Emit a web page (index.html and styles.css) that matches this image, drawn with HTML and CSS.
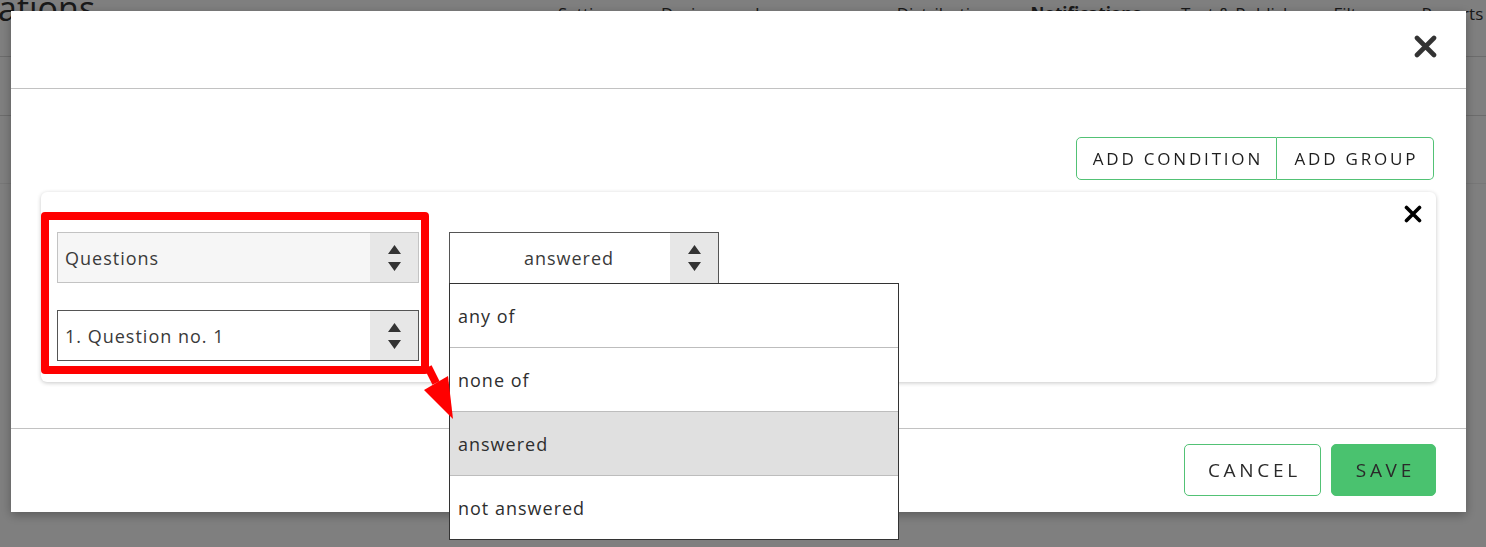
FILE: index.html
```html
<!DOCTYPE html>
<html lang="en">
<head>
    <meta charset="UTF-8">
    <meta name="viewport" content="width=device-width, initial-scale=1.0">
    <title>Notifications</title>
    <link rel="stylesheet" href="styles.css">
</head>
<body>
    <div class="page">
        <header class="page-head">
            <h1 class="page-title">ations</h1>
            <nav class="page-nav">
                <span>Settings</span>
                <span>Design</span>
                <span class="wide">Languages</span>
                <span>Distribution</span>
                <span class="active">Notifications</span>
                <span>Test &amp; Publish</span>
                <span>Filters</span>
                <span>Reports</span>
            </nav>
        </header>
        <div class="page-tabs"></div>
        <div class="page-bar"></div>
    </div>
    <div class="backdrop"></div>

    <div class="modal">
        <div class="modal-head">
            <button class="modal-close" aria-label="Close">
                <svg width="23" height="23" viewBox="0 0 23 23">
                    <path d="M3 3 L20 20 M20 3 L3 20" stroke="#333" stroke-width="4.6" stroke-linecap="round"/>
                </svg>
            </button>
        </div>
        <div class="modal-body">
            <div class="toolbar">
                <div class="btn-group">
                    <button class="btn-outline btn-first">ADD CONDITION</button>
                    <button class="btn-outline btn-last">ADD GROUP</button>
                </div>
            </div>
            <div class="condition">
                <button class="condition-remove" aria-label="Remove">
                    <svg width="18" height="18" viewBox="0 0 18 18">
                        <path d="M2.5 2.5 L15.5 15.5 M15.5 2.5 L2.5 15.5" stroke="#000" stroke-width="3.6" stroke-linecap="round"/>
                    </svg>
                </button>
                <div class="condition-fields">
                    <div class="field-stack">
                        <div class="select select-muted">
                            <span class="select-value">Questions</span>
                            <span class="select-arrows">
                                <svg width="13" height="26" viewBox="0 0 13 26"><path d="M6.5 0 L13 9 L0 9 Z M0 17 L13 17 L6.5 26 Z" fill="#333"/></svg>
                            </span>
                        </div>
                        <div class="select">
                            <span class="select-value">1. Question no. 1</span>
                            <span class="select-arrows">
                                <svg width="13" height="26" viewBox="0 0 13 26"><path d="M6.5 0 L13 9 L0 9 Z M0 17 L13 17 L6.5 26 Z" fill="#333"/></svg>
                            </span>
                        </div>
                    </div>
                    <div class="operator">
                        <div class="select select-open">
                            <span class="select-value select-center">answered</span>
                            <span class="select-arrows">
                                <svg width="13" height="26" viewBox="0 0 13 26"><path d="M6.5 0 L13 9 L0 9 Z M0 17 L13 17 L6.5 26 Z" fill="#333"/></svg>
                            </span>
                        </div>
                        <ul class="options">
                            <li>any of</li>
                            <li>none of</li>
                            <li class="selected">answered</li>
                            <li>not answered</li>
                        </ul>
                    </div>
                </div>
                <div class="highlight"></div>
                <svg class="callout-arrow" width="420" height="240" viewBox="0 0 420 240">
                    <path d="M387 175 L395 191" stroke="#f00" stroke-width="8"/>
                    <polygon points="383,198 407,184 412,227" fill="#f00"/>
                </svg>
            </div>
        </div>
        <div class="modal-foot">
            <button class="btn-cancel">CANCEL</button>
            <button class="btn-save">SAVE</button>
        </div>
    </div>
</body>
</html>
```

FILE: styles.css
```css
html, body {
    margin: 0;
    padding: 0;
    height: 100%;
    overflow: hidden;
}
body {
    font-family: "Open Sans", Arial, sans-serif;
    background-color: #fff;
    color: #333;
}
button {
    font-family: inherit;
    cursor: pointer;
}

/* page behind the dialog */
.page-head {
    display: flex;
    height: 56px;
    border-bottom: 1px solid #d8d8d8;
    white-space: nowrap;
}
.page-title {
    flex: none;
    width: 560px;
    margin: -8px 0 0 -2px;
    font-size: 34px;
    font-weight: 400;
    line-height: 33px;
}
.page-nav {
    display: flex;
    gap: 40px;
    padding-top: 4px;
    font-size: 17px;
    line-height: 20px;
}
.page-nav .wide {
    padding-right: 17px;
}
.page-nav .active {
    font-weight: 700;
}
.page-tabs {
    height: 58px;
    border-bottom: 1px solid #d8d8d8;
}
.page-bar {
    height: 67px;
    border-bottom: 1px solid #eee;
}
.backdrop {
    position: fixed;
    inset: 0;
    background-color: rgba(0, 0, 0, 0.5);
}

/* dialog */
.modal {
    position: fixed;
    top: 11px;
    left: 11px;
    width: 1455px;
    background-color: #fff;
    box-shadow: 0 3px 10px rgba(0, 0, 0, 0.3);
}
.modal-head {
    display: flex;
    justify-content: flex-end;
    align-items: center;
    height: 78px;
    padding: 0 29px 6px 0;
    box-sizing: border-box;
    border-bottom: 1px solid #c2c2c2;
}
.modal-close,
.condition-remove {
    display: flex;
    padding: 0;
    border: none;
    background: none;
}
.modal-body {
    padding: 48px 30px 46px;
    border-bottom: 1px solid #c2c2c2;
}
.toolbar {
    display: flex;
    justify-content: flex-end;
    margin: 0 2px 12px 0;
}
.btn-group {
    display: flex;
}
.btn-outline {
    height: 43px;
    padding: 0 0 1px 2.8px;
    font-size: 17px;
    letter-spacing: 2.8px;
    color: #1e1e1e;
    background-color: #fff;
    border: 1px solid #52c275;
}
.btn-first {
    width: 201px;
    border-radius: 5px 0 0 5px;
}
.btn-last {
    width: 157px;
    border-left: none;
    border-radius: 0 5px 5px 0;
}

/* condition card */
.condition {
    position: relative;
    padding: 40px 0 21px 16px;
    border-radius: 6px;
    box-shadow: 0 1px 4px rgba(0, 0, 0, 0.22);
}
.condition-remove {
    position: absolute;
    top: 13px;
    right: 14px;
}
.condition-fields {
    display: flex;
    align-items: flex-start;
    gap: 30px;
}
.field-stack {
    display: flex;
    flex-direction: column;
    gap: 27px;
    width: 362px;
}
.select {
    display: flex;
    height: 51px;
    box-sizing: border-box;
    border: 1px solid #555;
    background-color: #fff;
}
.select-muted {
    border-color: #c3c3c3;
    background-color: #f6f6f6;
}
.select-value {
    flex: 1;
    display: flex;
    align-items: center;
    padding-left: 7px;
    font-size: 18px;
    letter-spacing: 1px;
    color: #3a3a3a;
}
.select-center {
    justify-content: center;
    padding-left: 18px;
}
.select-arrows {
    display: flex;
    align-items: center;
    justify-content: center;
    width: 48px;
    background-color: #e7e7e7;
}
.operator {
    position: relative;
    width: 270px;
}
.select-open {
    border-bottom: none;
}
.options {
    position: absolute;
    top: 100%;
    left: 0;
    z-index: 5;
    width: 450px;
    box-sizing: border-box;
    margin: 0;
    padding: 0;
    list-style: none;
    background-color: #fff;
    border: 1px solid #333;
}
.options li {
    display: flex;
    align-items: center;
    height: 64px;
    box-sizing: border-box;
    padding-left: 8px;
    font-size: 18px;
    letter-spacing: 1px;
    color: #2e2e2e;
    border-bottom: 1px solid #bdbdbd;
}
.options li:last-child {
    height: 63px;
    border-bottom: none;
}
.options .selected {
    background-color: #e0e0e0;
}

/* annotation */
.highlight {
    position: absolute;
    top: 20px;
    left: 0;
    z-index: 6;
    width: 388px;
    height: 162px;
    box-sizing: border-box;
    border: 8px solid #f00;
    border-radius: 4px;
}
.callout-arrow {
    position: absolute;
    top: 0;
    left: 0;
    z-index: 7;
    overflow: visible;
    pointer-events: none;
}

/* footer */
.modal-foot {
    display: flex;
    justify-content: flex-end;
    gap: 10px;
    padding: 15px 30px 16px;
}
.btn-cancel,
.btn-save {
    height: 52px;
    padding: 0 0 0 3.7px;
    font-size: 19px;
    letter-spacing: 3.7px;
    color: #2a2a2a;
    border-radius: 5px;
}
.btn-cancel {
    width: 137px;
    background-color: #fff;
    border: 1px solid #52c275;
}
.btn-save {
    width: 105px;
    background-color: #4ac26f;
    border: 1px solid #4ac26f;
}
```
